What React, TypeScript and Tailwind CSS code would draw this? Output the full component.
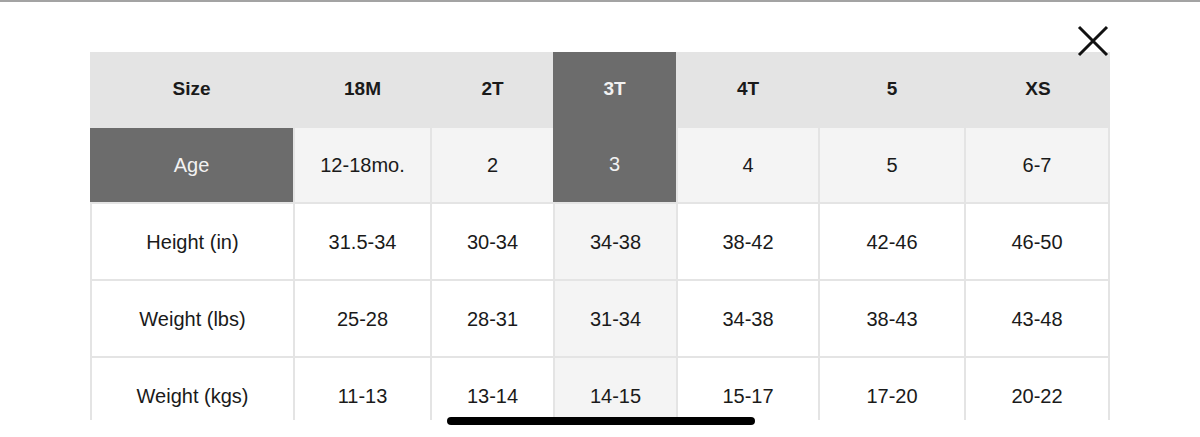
const sizes = ["18M", "2T", "3T", "4T", "5", "XS"]
const ages = ["12-18mo.", "2", "3", "4", "5", "6-7"]

const rows = [
  { label: "Height (in)", values: ["31.5-34", "30-34", "34-38", "38-42", "42-46", "46-50"] },
  { label: "Weight (lbs)", values: ["25-28", "28-31", "31-34", "34-38", "38-43", "43-48"] },
  { label: "Weight (kgs)", values: ["11-13", "13-14", "14-15", "15-17", "17-20", "20-22"] },
]

const SELECTED = 2

export default function App() {
  return (
    <div
      className="relative h-[437px] w-[1200px] overflow-hidden bg-white text-[#1a1a1a]"
      style={{ fontFamily: '"Liberation Sans", Arial, sans-serif' }}
    >
      {/* top edge of the sheet */}
      <div className="h-[2px] w-full bg-[#a3a3a3]" />

      {/* close */}
      <button className="absolute left-[1077px] top-[25px] h-[32px] w-[32px]" aria-label="Close">
        <svg viewBox="0 0 32 32" className="h-full w-full">
          <path d="M2 2 L30 30 M30 2 L2 30" stroke="#111" strokeWidth="3" fill="none" />
        </svg>
      </button>

      {/* size chart */}
      <div className="ml-[90px] mt-[50px] h-[368px] w-[1020px] overflow-hidden">
        <div className="grid grid-cols-[201px_135px_121px_121px_140px_144px_142px] grid-rows-[74px_74px_75px_75px_75px] gap-[2px] bg-[#e4e4e4] px-[2px]">
          <div className="-ml-[2px] flex items-center justify-center bg-[#e4e4e4] text-[19px] font-bold">Size</div>
          {sizes.map((s, i) =>
            i === SELECTED ? (
              <div key={s} className="-ml-[2px] row-span-2 flex flex-col bg-[#6c6c6c] text-[#f2f2f2]">
                <div className="flex h-[74px] items-center justify-center text-[19px] font-bold">{s}</div>
                <div className="flex flex-1 items-center justify-center text-[20px]">{ages[i]}</div>
              </div>
            ) : (
              <div
                key={s}
                className={`flex items-center justify-center bg-[#e4e4e4] text-[19px] font-bold ${i === sizes.length - 1 ? "-mr-[2px]" : ""}`}
              >
                {s}
              </div>
            )
          )}

          <div className="-ml-[2px] flex items-center justify-center bg-[#6c6c6c] text-[20px] text-[#f2f2f2]">Age</div>
          {ages.map((a, i) =>
            i === SELECTED ? null : (
              <div key={a + i} className="flex items-center justify-center bg-[#f4f4f4] text-[20px]">
                {a}
              </div>
            )
          )}

          {rows.map((r) => (
            <>
              <div key={r.label} className="flex items-center justify-center bg-white text-[20px]">
                {r.label}
              </div>
              {r.values.map((v, i) => (
                <div
                  key={r.label + i}
                  className={`flex items-center justify-center text-[20px] ${i === SELECTED ? "bg-[#f4f4f4]" : "bg-white"}`}
                >
                  {v}
                </div>
              ))}
            </>
          ))}
        </div>
      </div>

      {/* scroll indicator */}
      <div className="absolute left-[447px] top-[417px] h-[8px] w-[308px] rounded-full bg-black" />
    </div>
  )
}
